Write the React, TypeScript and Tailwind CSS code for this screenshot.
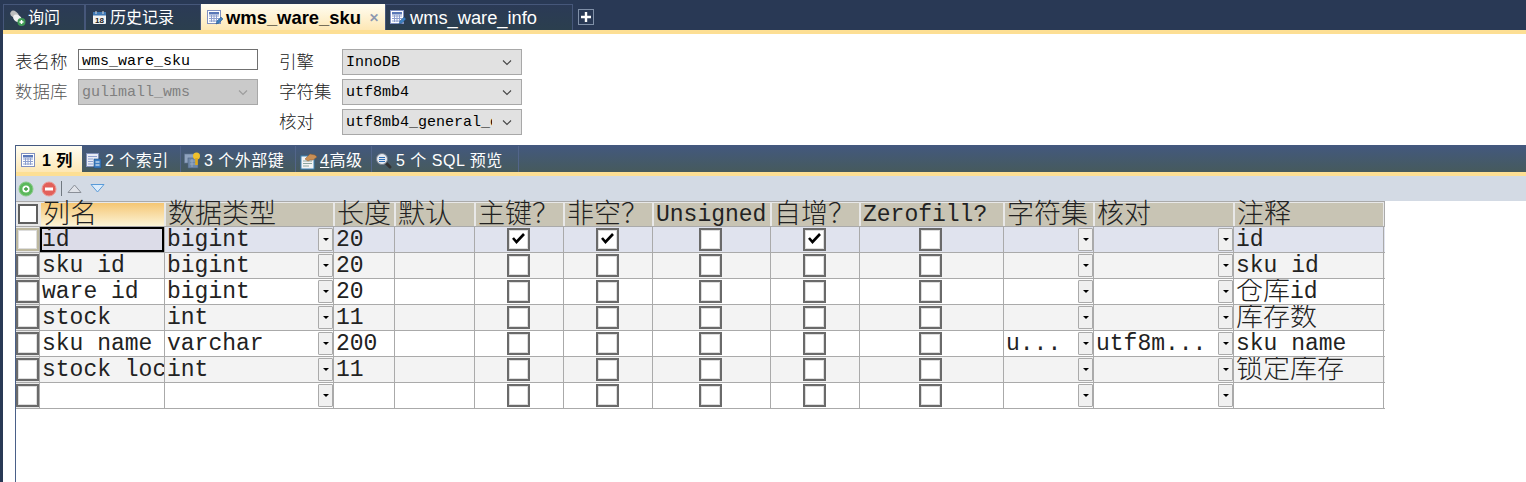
import React from 'react';

const MONO = "font-['Liberation_Mono','Noto_Sans_CJK_SC',monospace]";
const ROW_COLS = 'grid grid-cols-[24px_125px_169px_61px_80px_89px_89px_118px_89px_144px_90px_140px_150px]';

function Zh({ children, className = '' }: { children: React.ReactNode; className?: string }) {
  return <span className={`inline-block font-['Noto_Sans_CJK_SC',sans-serif] text-[27px] leading-[16px] font-light ${className}`}>{children}</span>;
}

function TableIcon({ pencil = false }: { pencil?: boolean }) {
  return (
    <svg width="18" height="18" viewBox="0 0 18 18" className="shrink-0">
      <rect x="1.5" y="1.5" width="13" height="13" fill="#fff" stroke="#8090c0" />
      <rect x="3" y="3" width="10" height="2.5" fill="#5a78b8" />
      <path d="M3 7h10M3 9.5h10M3 12h10M5.5 6v7M8 6v7M10.5 6v7" stroke="#8ea0d0" strokeWidth="1" />
      {pencil && <path d="M10 15l1-3 4-4 2 2-4 4z" fill="#3d7fc0" stroke="#25507f" strokeWidth="0.5" />}
    </svg>
  );
}

function QueryIcon() {
  return (
    <svg width="18" height="18" viewBox="0 0 18 18" className="shrink-0">
      <ellipse cx="5.5" cy="5.5" rx="4.5" ry="3.2" fill="#bdbdbd" transform="rotate(35 5.5 5.5)" />
      <ellipse cx="8.5" cy="9.5" rx="4.8" ry="3.4" fill="#f0f0f0" transform="rotate(35 8.5 9.5)" />
      <circle cx="12.5" cy="13" r="4" fill="#3f9a55" />
      <path d="M10.5 13h4M12.5 11v4" stroke="#fff" strokeWidth="1.4" />
    </svg>
  );
}

function CalendarIcon() {
  return (
    <svg width="16" height="16" viewBox="0 0 16 16" className="shrink-0">
      <rect x="1" y="2" width="13" height="12" rx="1" fill="#f2f2f2" />
      <rect x="1" y="2" width="13" height="3.5" fill="#3f78b5" />
      <path d="M4 1v3M11 1v3" stroke="#ddd" />
      <text x="7.5" y="12.5" fontSize="8" fontWeight="700" textAnchor="middle" fill="#222" fontFamily="Liberation Sans">18</text>
    </svg>
  );
}

function IndexIcon() {
  return (
    <svg width="18" height="18" viewBox="0 0 18 18" className="shrink-0">
      <rect x="1.5" y="1.5" width="12" height="13" fill="#e8ecf6" stroke="#7f8fb8" />
      <path d="M3 4.5h9M3 7h5M3 9.5h5M3 12h5" stroke="#8ea0d0" />
      <rect x="9" y="7" width="7" height="9" fill="#3d7cc0" stroke="#1d4f85" strokeWidth="0.6" />
      <path d="M10.5 10h4M10.5 13h4" stroke="#fff" />
    </svg>
  );
}

function ForeignKeyIcon() {
  return (
    <svg width="18" height="18" viewBox="0 0 18 18" className="shrink-0">
      <rect x="0.5" y="2" width="12" height="9" fill="#8fa3bf" stroke="#5f7390" strokeWidth="0.6" />
      <rect x="4" y="6" width="10" height="10" fill="#6f88a8" stroke="#4c627f" strokeWidth="0.6" />
      <path d="M6 9h7M6 12h7M8 7v8" stroke="#a5b6cc" strokeWidth="0.7" />
      <circle cx="12.5" cy="4" r="3.5" fill="#f0c02c" />
      <rect x="11.2" y="6" width="2.6" height="7" fill="#e0a818" />
    </svg>
  );
}

function AdvancedIcon() {
  return (
    <svg width="18" height="18" viewBox="0 0 18 18" className="shrink-0">
      <rect x="1" y="4" width="13" height="13" fill="#f4f4f4" stroke="#3f86b8" />
      <path d="M3 9h9M3 11.5h9M3 14h6" stroke="#8aa6a0" />
      <path d="M5 7l5-5 5 1 2 2-4 3-3 0-2 1z" fill="#c98f55" stroke="#8a5a30" strokeWidth="0.5" />
    </svg>
  );
}

function SearchIcon() {
  return (
    <svg width="18" height="18" viewBox="0 0 18 18" className="shrink-0">
      <path d="M10 10l5 5" stroke="#333" strokeWidth="3" strokeLinecap="round" />
      <circle cx="7" cy="7" r="5.5" fill="#e4e8f0" stroke="#77808c" />
      <path d="M4 5.5h6M4 7.5h6M4 9.5h6" stroke="#2f6fb5" strokeWidth="1.2" />
    </svg>
  );
}

function TopTab({ children, className = '' }: { children: React.ReactNode; className?: string }) {
  return (
    <div className={`flex items-center h-[26px] pt-px border border-b-0 border-[#46577a] bg-gradient-to-b from-[#2b3a56] to-[#2b3f4e] text-white text-[16px] ${className}`}>
      {children}
    </div>
  );
}

function BottomTab({ children, className = '' }: { children: React.ReactNode; className?: string }) {
  return (
    <div className={`flex items-center h-[26px] pt-[3px] border-r border-[#52658a] text-white text-[16px] tracking-[0.5px] ${className}`}>
      {children}
    </div>
  );
}

function FormSelect({ value, disabled = false, className = '' }: { value: string; disabled?: boolean; className?: string }) {
  return (
    <div className={`relative flex items-center w-[180px] h-[26px] border border-[#a8a8a8] pl-[3px] pr-[29px] pt-[3px] overflow-hidden whitespace-nowrap ${MONO} text-[15px] ${disabled ? 'bg-[#cacaca] text-[#808080]' : 'bg-[#e1e1e1] text-black'} ${className}`}>
      <span className="overflow-hidden">{value}</span>
      <svg width="10" height="6" viewBox="0 0 10 6" className="absolute right-[9px] top-[10px]">
        <path d="M1 0.5l4 4 4-4" fill="none" stroke={disabled ? '#9c9c9c' : '#444'} strokeWidth="1.1" />
      </svg>
    </div>
  );
}

function Label({ children, className = '' }: { children: React.ReactNode; className?: string }) {
  return <div className={`font-['Noto_Sans_CJK_SC',sans-serif] font-light text-[17.5px] leading-[24px] text-[#222] ${className}`}>{children}</div>;
}

function Check({ checked = false, framed = false }: { checked?: boolean; framed?: boolean }) {
  return (
    <div className={`relative w-[23px] h-[23px] bg-white border-2 ${framed ? 'border-[#bdb89f]' : 'border-[#6a6a6a]'} shadow-[inset_0_0_0_1px_#dddddd]`}>
      {checked && (
        <svg width="15" height="13" viewBox="0 0 15 13" className="absolute left-[2px] top-[2px]">
          <path d="M2 6l3.5 4L13 2" fill="none" stroke="#000" strokeWidth="2.6" />
        </svg>
      )}
    </div>
  );
}

function Combo() {
  return (
    <div className="absolute right-0 top-px flex items-center justify-center w-[15px] h-[23px] bg-[#f0f0f0] border border-[#aaaaaa] rounded-[1px]">
      <svg width="6" height="3" viewBox="0 0 6 3"><path d="M0 0h6L3 3z" fill="#000" /></svg>
    </div>
  );
}

function TextCell({ children, combo = false, selected = false }: { children?: React.ReactNode; combo?: boolean; selected?: boolean }) {
  return (
    <div className={`relative h-[25px] border-r border-[#aaaaaa] pl-[2px] overflow-hidden whitespace-nowrap leading-[26px] ${selected ? 'bg-[#dcdce8] shadow-[inset_0_0_0_2px_#000000]' : ''}`}>
      {children}
      {combo && <Combo />}
    </div>
  );
}

function BoxCell({ checked = false }: { checked?: boolean }) {
  return (
    <div className="flex justify-center items-start pt-px pr-[2px] h-[25px] border-r border-[#aaaaaa]">
      <Check checked={checked} />
    </div>
  );
}

function HeaderCell({ children, active = false, latin = false }: { children: React.ReactNode; active?: boolean; latin?: boolean }) {
  return (
    <div className={`h-[23px] mx-px mt-px flex items-center pl-[2px] whitespace-nowrap ${latin ? 'pt-[1px]' : 'pb-[6px]'} ${active ? 'bg-gradient-to-b from-[#f5c672] to-[#fbf4d6]' : 'bg-[#c8c4b4]'}`}>
      {children}
    </div>
  );
}

type Row = {
  name: React.ReactNode;
  type: string;
  len: string;
  pk?: boolean;
  nn?: boolean;
  ai?: boolean;
  charset?: string;
  collation?: string;
  comment?: React.ReactNode;
};

const rows: Row[] = [
  { name: 'id', type: 'bigint', len: '20', pk: true, nn: true, ai: true, comment: 'id' },
  { name: 'sku id', type: 'bigint', len: '20', comment: 'sku id' },
  { name: 'ware id', type: 'bigint', len: '20', comment: <><Zh className="translate-y-[2px]">仓库</Zh>id</> },
  { name: 'stock', type: 'int', len: '11', comment: <Zh className="translate-y-[2px]">库存数</Zh> },
  { name: 'sku name', type: 'varchar', len: '200', charset: 'u...', collation: 'utf8m...', comment: 'sku name' },
  { name: 'stock locked', type: 'int', len: '11', comment: <Zh className="translate-y-[2px]">锁定库存</Zh> },
  { name: '', type: '', len: '' },
];

const rowBg = ['bg-[#e0e3ee]', 'bg-[#f3f3f3]', 'bg-white', 'bg-[#f3f3f3]', 'bg-white', 'bg-[#f3f3f3]', 'bg-white'];

export default function App() {
  return (
    <div className="flex w-[1526px] h-[482px] overflow-hidden bg-white">
      <div className="w-[3px] shrink-0 bg-[#293955]" />
      <div className="flex-1 flex flex-col min-w-0">
        {/* Top tabs */}
        <div className="flex items-end h-[30px] pt-[4px] bg-[#293955] font-['Liberation_Sans','Noto_Sans_CJK_SC',sans-serif]">
          <TopTab className="w-[82px] pl-[5px] gap-[1px]"><QueryIcon />询问</TopTab>
          <TopTab className="w-[116px] pl-[6px] gap-[2px]"><CalendarIcon />历史记录</TopTab>
          <div className="flex items-center h-[26px] w-[184px] pt-px pl-[5px] gap-[2px] bg-gradient-to-b from-[#fffdf2] to-[#fde7b4] text-black text-[18.4px] font-bold">
            <TableIcon pencil />
            <span>wms_ware_sku</span>
            <span className="ml-[6px] text-[12px] text-[#8c98b0]">✕</span>
          </div>
          <TopTab className="w-[188px] pl-[3px] gap-[3px] text-[18.3px]"><TableIcon pencil />wms_ware_info</TopTab>
          <div className="flex items-center justify-center w-[16px] h-[16px] ml-[5px] mb-[5px] border border-[#8090a8] text-white">
            <svg width="10" height="10" viewBox="0 0 10 10"><path d="M5 0v10M0 5h10" stroke="#fff" strokeWidth="2.4" /></svg>
          </div>
        </div>
        <div className="h-[4px] bg-[#fddf94]" />

        {/* Table options */}
        <div className="flex h-[111px] pl-[12px] pt-[15px] gap-[21px]">
          <div className="flex flex-col">
            <div className="flex h-[30px] gap-[10px]">
              <Label className="w-[53px]">表名称</Label>
              <div className={`w-[180px] h-[21px] border border-[#707070] bg-white pl-[3px] leading-[23px] text-[15px] text-black ${MONO}`}>wms_ware_sku</div>
            </div>
            <div className="flex h-[30px] gap-[10px]">
              <Label className="w-[53px] text-[#555]">数据库</Label>
              <FormSelect value="gulimall_wms" disabled />
            </div>
          </div>
          <div className="flex flex-col">
            <div className="flex h-[30px] gap-[10px]">
              <Label className="w-[53px]">引擎</Label>
              <FormSelect value="InnoDB" />
            </div>
            <div className="flex h-[30px] gap-[10px]">
              <Label className="w-[53px]">字符集</Label>
              <FormSelect value="utf8mb4" />
            </div>
            <div className="flex h-[30px] gap-[10px]">
              <Label className="w-[53px]">核对</Label>
              <FormSelect value="utf8mb4_general_ci" />
            </div>
          </div>
        </div>

        {/* Column editor */}
        <div className="flex-1 ml-[12px] border-l border-[#4a6088] flex flex-col">
          <div className="flex h-[27px] pt-px bg-gradient-to-b from-[#43587f] to-[#465a5c] font-['Liberation_Sans','Noto_Sans_CJK_SC',sans-serif]">
            <div className="flex items-center w-[66px] h-[26px] pt-[3px] pl-[4px] gap-[4px] bg-gradient-to-b from-[#fffdf2] to-[#fde7b4] text-black text-[16px] font-bold tracking-[0.5px]">
              <TableIcon />1 列
            </div>
            <BottomTab className="w-[99px] pl-[3px] gap-[2px]"><IndexIcon />2 个索引</BottomTab>
            <BottomTab className="w-[115px] pl-[3px] gap-[2px]"><ForeignKeyIcon />3 个外部键</BottomTab>
            <BottomTab className="w-[76px] pl-[4px] gap-[2px]"><AdvancedIcon /><span><span className="underline">4</span>高级</span></BottomTab>
            <BottomTab className="w-[147px] pl-[3px] gap-[3px]"><SearchIcon />5 个 SQL 预览</BottomTab>
          </div>
          <div className="h-[4px] bg-[#fddf94]" />
          <div className="flex items-center h-[25px] bg-[#d3dae4] pl-[2px]">
            <svg width="16" height="16" viewBox="0 0 16 16">
              <circle cx="8" cy="8" r="7" fill="#5cb85c" stroke="#8acb8a" />
              <circle cx="8" cy="8" r="3.6" fill="#fff" />
              <path d="M6 8h4M8 6v4" stroke="#3f9a3f" strokeWidth="1.3" />
            </svg>
            <svg width="16" height="16" viewBox="0 0 16 16" className="ml-[7px]">
              <circle cx="8" cy="8" r="7" fill="#e2605a" stroke="#eb9a96" />
              <rect x="4" y="6.5" width="8" height="3" fill="#fff" />
            </svg>
            <div className="w-px h-[15px] ml-[4px] bg-[#707880]" />
            <svg width="15" height="9" viewBox="0 0 15 9" className="ml-[5px]">
              <path d="M1 8.5L7.5 1 14 8.5z" fill="#dfe2e8" stroke="#8a8f98" />
            </svg>
            <svg width="15" height="9" viewBox="0 0 15 9" className="ml-[8px]">
              <path d="M1 .5h13L7.5 8z" fill="#dcecfb" stroke="#5a9bd8" />
            </svg>
          </div>

          {/* Grid */}
          <div className={`w-[1369px] text-[23px] text-[#222] ${MONO}`}>
            <div className={`${ROW_COLS} h-[26px] border-y border-r border-[#aaaaaa] bg-[#e8e8e8]`}>
              <div className="flex justify-center pt-[2px]"><div className="w-[20px] h-[20px] bg-white border-2 border-[#5f5f5f]" /></div>
              <HeaderCell active><Zh>列名</Zh></HeaderCell>
              <HeaderCell><Zh>数据类型</Zh></HeaderCell>
              <HeaderCell><Zh>长度</Zh></HeaderCell>
              <HeaderCell><Zh>默认</Zh></HeaderCell>
              <HeaderCell><Zh>主键？</Zh></HeaderCell>
              <HeaderCell><Zh>非空？</Zh></HeaderCell>
              <HeaderCell latin>Unsigned</HeaderCell>
              <HeaderCell><Zh>自增？</Zh></HeaderCell>
              <HeaderCell latin>Zerofill?</HeaderCell>
              <HeaderCell><Zh>字符集</Zh></HeaderCell>
              <HeaderCell><Zh>核对</Zh></HeaderCell>
              <HeaderCell><Zh>注释</Zh></HeaderCell>
            </div>
            {rows.map((row, i) => (
              <div key={i} className={`${ROW_COLS} h-[26px] border-b border-[#aaaaaa] ${rowBg[i]}`}>
                <div className="flex justify-center pt-px border-r border-[#aaaaaa] bg-[#e8e8e8]">
                  <Check framed={i === 0} />
                </div>
                <TextCell selected={i === 0}>{row.name}</TextCell>
                <TextCell combo>{row.type}</TextCell>
                <TextCell>{row.len}</TextCell>
                <TextCell />
                <BoxCell checked={row.pk} />
                <BoxCell checked={row.nn} />
                <BoxCell />
                <BoxCell checked={row.ai} />
                <BoxCell />
                <TextCell combo>{row.charset}</TextCell>
                <TextCell combo>{row.collation}</TextCell>
                <TextCell>{row.comment}</TextCell>
              </div>
            ))}
          </div>
        </div>
      </div>
    </div>
  );
}
